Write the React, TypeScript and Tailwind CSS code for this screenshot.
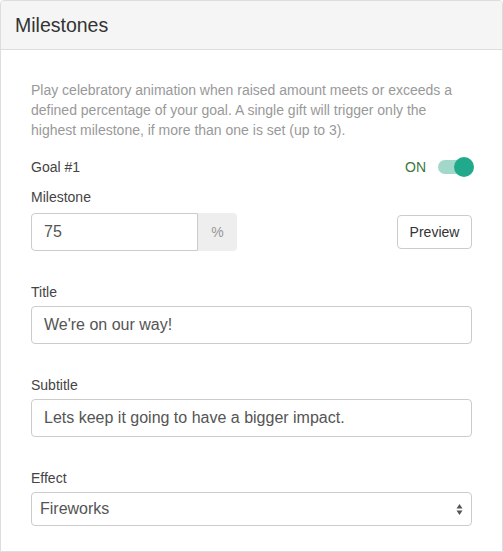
import React from "react";

export default function App() {
  return (
    <div className="w-[503px] h-[552px] bg-white" style={{ fontFamily: '"Liberation Sans", Arial, sans-serif' }}>
      <div className="h-[552px] border border-[#dddddd] rounded-t-[4px] flex flex-col">
        <div className="h-[49px] bg-[#f5f5f5] border-b border-[#dddddd] rounded-t-[4px] flex items-center px-[14px] pt-[2px]">
          <h3 className="text-[19.5px] text-[#333333] leading-none">Milestones</h3>
        </div>
        <div className="px-[30px] pt-[30px] flex flex-col">
          <p className="text-[14px] leading-[20px] text-[#999999]">
            Play celebratory animation when raised amount meets or exceeds a defined percentage of your goal. A single gift will trigger only the highest milestone, if more than one is set (up to 3).
          </p>
          <div className="mt-[17px] flex items-center justify-between h-[20px]">
            <span className="text-[14px] text-[#444444]">Goal #1</span>
            <div className="flex items-center gap-[12px]">
              <span className="text-[14px] text-[#3c763d]">ON</span>
              <div className="relative w-[36px] h-[20px] flex items-center mr-[-2px]">
                <div className="w-[34px] h-[14px] rounded-full bg-[#a1d8ca]" />
                <div className="absolute right-0 top-0 w-[20px] h-[20px] rounded-full bg-[#21a98b]" />
              </div>
            </div>
          </div>
          <label className="mt-[10px] text-[14px] text-[#444444] leading-[20px]">Milestone</label>
          <div className="mt-[6px] flex items-center justify-between">
            <div className="flex h-[38px]">
              <div className="w-[167px] border border-[#cccccc] rounded-l-[4px] flex items-center px-[12px] text-[16px] text-[#555555]">75</div>
              <div className="w-[39px] bg-[#eeeeee] rounded-r-[4px] flex items-center justify-center text-[14px] text-[#999999]">%</div>
            </div>
            <button className="w-[75px] h-[34px] border border-[#cccccc] rounded-[4px] bg-white text-[14px] text-[#333333]">Preview</button>
          </div>
          <label className="mt-[31px] text-[14px] text-[#444444] leading-[20px]">Title</label>
          <div className="mt-[4px] h-[38px] border border-[#cccccc] rounded-[4px] flex items-center px-[12px] text-[16px] text-[#555555]">We're on our way!</div>
          <label className="mt-[31px] text-[14px] text-[#444444] leading-[20px]">Subtitle</label>
          <div className="mt-[4px] h-[38px] border border-[#cccccc] rounded-[4px] flex items-center px-[12px] text-[16px] text-[#555555]">Lets keep it going to have a bigger impact.</div>
          <label className="mt-[31px] text-[14px] text-[#444444] leading-[20px]">Effect</label>
          <div className="mt-[4px] h-[34px] border border-[#cccccc] rounded-[4px] flex items-center justify-between pl-[8px] pr-[8px] text-[16px] text-[#555555]">
            <span>Fireworks</span>
            <svg width="7" height="13" viewBox="0 0 7 13">
              <path d="M3.5 1 L6.5 5.5 L0.5 5.5 Z" fill="#555" />
              <path d="M3.5 12 L6.5 7.5 L0.5 7.5 Z" fill="#555" />
            </svg>
          </div>
        </div>
      </div>
    </div>
  );
}
